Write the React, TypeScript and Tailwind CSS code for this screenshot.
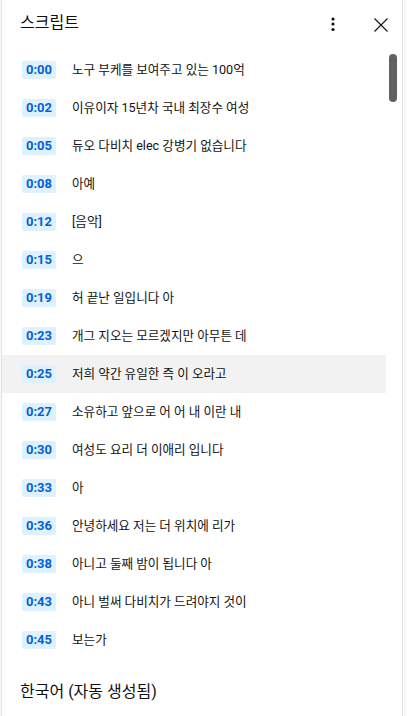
const lines = [
  ["0:00", "노구 부케를 보여주고 있는 100억"],
  ["0:02", "이유이자 15년차 국내 최장수 여성"],
  ["0:05", "듀오 다비치 elec 강병기 없습니다"],
  ["0:08", "아예"],
  ["0:12", "[음악]"],
  ["0:15", "으"],
  ["0:19", "허 끝난 일입니다 아"],
  ["0:23", "개그 지오는 모르겠지만 아무튼 데"],
  ["0:25", "저희 약간 유일한 즉 이 오라고"],
  ["0:27", "소유하고 앞으로 어 어 내 이란 내"],
  ["0:30", "여성도 요리 더 이애리 입니다"],
  ["0:33", "아"],
  ["0:36", "안녕하세요 저는 더 위치에 리가"],
  ["0:38", "아니고 둘째 밤이 됩니다 아"],
  ["0:43", "아니 벌써 다비치가 드려야지 것이"],
  ["0:45", "보는가"],
];

const font = { fontFamily: 'Roboto, "Noto Sans CJK KR", sans-serif' };

const App = () => {
  return (
    <div className="w-[407px] h-[716px] bg-[#f9f9f9] overflow-hidden" style={font}>
      <div className="ml-[1px] w-[402px] h-full bg-white border-l border-r border-[#e3e3e3] flex flex-col">
        {/* header */}
        <div className="h-[51px] flex items-start shrink-0">
          <h1 className="mt-[12px] ml-[18px] text-[16px] leading-[22px] text-[#0f0f0f]">스크립트</h1>
          <div className="ml-auto flex items-start">
            <svg width="6" height="16" viewBox="0 0 6 16" className="mt-[16px] mr-[37px]">
              <circle cx="3" cy="3" r="1.6" fill="#0f0f0f" />
              <circle cx="3" cy="8" r="1.6" fill="#0f0f0f" />
              <circle cx="3" cy="13.5" r="1.6" fill="#0f0f0f" />
            </svg>
            <svg width="16" height="16" viewBox="0 0 16 16" className="mt-[17px] mr-[13px]">
              <path d="M1.5 1.5 L14.5 14.5 M14.5 1.5 L1.5 14.5" stroke="#0f0f0f" strokeWidth="1.1" fill="none" />
            </svg>
          </div>
        </div>

        {/* list + scrollbar */}
        <div className="flex">
          <div className="w-[384px]">
            {lines.map(([t, text]) => (
              <div
                key={t}
                className={`h-[38px] flex items-center pl-[20px] ${t === "0:25" ? "bg-[#f2f2f2]" : ""}`}
              >
                <span className="w-[34px] h-[18px] flex items-center justify-center bg-[#def1ff] text-[#065fd4] text-[13px] font-bold rounded-[2px]">
                  {t}
                </span>
                <span className="ml-[16px] text-[12.6px] text-[#131313]">{text}</span>
              </div>
            ))}
          </div>
          <div className="w-[16px] pt-[3px] pl-[3px]">
            <div className="w-[8px] h-[48px] rounded-full bg-[#616161]" />
          </div>
        </div>

        {/* footer */}
        <div className="pt-[21px] pl-[18px]">
          <span className="text-[16px] leading-[22px] text-[#0f0f0f]">한국어 (자동 생성됨)</span>
        </div>
      </div>
    </div>
  );
};

export default App;
